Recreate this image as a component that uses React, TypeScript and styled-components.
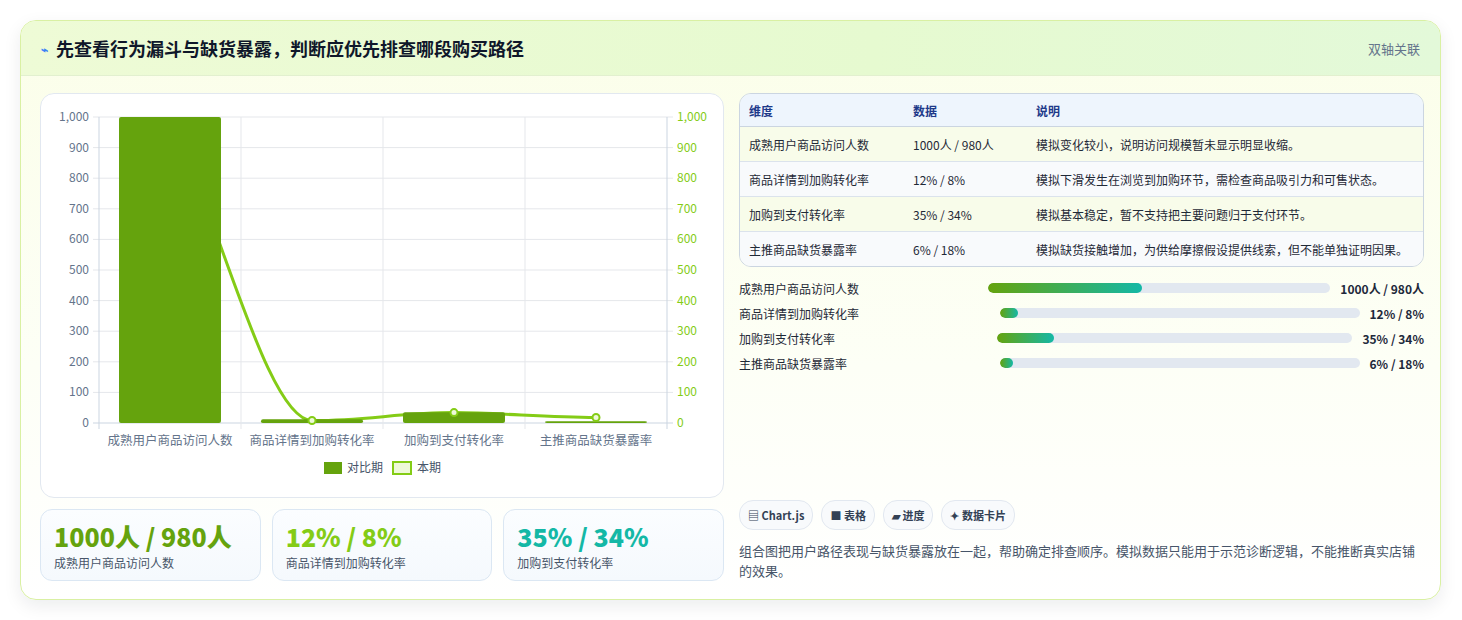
import styled, { createGlobalStyle } from 'styled-components';

const Global = createGlobalStyle`
  body {
    margin: 0;
    background: #ffffff;
    font-family: "Noto Sans CJK SC", "Noto Sans", sans-serif;
    color: #334155;
  }
`;

const Page = styled.div`
  padding: 20px 21px 20px 20px;
`;

const Card = styled.section`
  border: 1px solid #d9f0a3;
  border-radius: 16px;
  background: linear-gradient(180deg, #fbfee9 0%, #fdfff6 60%, #ffffff 100%);
  box-shadow: 0 6px 18px rgba(15, 23, 42, 0.08);
  overflow: hidden;
`;

const Header = styled.header`
  height: 54px;
  display: flex;
  align-items: center;
  justify-content: space-between;
  padding: 0 20px;
  background: linear-gradient(90deg, #eefbd6 0%, #e6fad0 60%, #e3f9d9 100%);
  border-bottom: 1px solid #e2f0cf;
`;

const Title = styled.h2`
  margin: 0;
  font-size: 18px;
  font-weight: 700;
  color: #0f172a;
  display: flex;
  align-items: center;
  gap: 8px;
`;

const Tag = styled.span`
  font-size: 13px;
  color: #64748b;
`;

const Body = styled.div`
  display: grid;
  grid-template-columns: 684px 685px;
  gap: 15px;
  padding: 17px 18px 18px 19px;
`;

const Column = styled.div`
  display: flex;
  flex-direction: column;
`;

const ChartBox = styled.div`
  height: 403px;
  border: 1px solid #e2e8f0;
  border-radius: 14px;
  background: #ffffff;
`;

const Stats = styled.div`
  margin-top: 11px;
  display: grid;
  grid-template-columns: repeat(3, 1fr);
  gap: 11px;
`;

const Stat = styled.div`
  height: 72px;
  box-sizing: border-box;
  border: 1px solid #dbe7f3;
  border-radius: 12px;
  background: linear-gradient(180deg, #fbfdff, #f5f9fd);
  padding: 10px 13px;
`;

const StatValue = styled.div<{ $color: string }>`
  font-size: 25px;
  font-weight: 800;
  line-height: 32px;
  color: ${(p) => p.$color};
`;

const StatLabel = styled.div`
  font-size: 12px;
  color: #475569;
  margin-top: 2px;
`;

const Table = styled.table`
  width: 100%;
  border-collapse: separate;
  border-spacing: 0;
  border: 1px solid #cbd5e1;
  border-radius: 12px;
  overflow: hidden;
  font-size: 12px;
`;

const Th = styled.th`
  text-align: left;
  font-weight: 600;
  color: #1e3a8a;
  background: #eef5fd;
  height: 32px;
  padding: 0 9px;
  border-bottom: 1px solid #cbd5e1;
`;

const Tr = styled.tr<{ $alt: boolean }>`
  background: ${(p) => (p.$alt ? '#f8fafc' : '#f8fcea')};
`;

const Td = styled.td<{ $last: boolean }>`
  height: 34px;
  padding: 0 9px;
  color: #1f2937;
  border-bottom: ${(p) => (p.$last ? 'none' : '1px solid #dbe3ec')};
`;

const Bars = styled.div`
  margin-top: 12px;
  display: flex;
  flex-direction: column;
  gap: 7px;
`;

const BarRow = styled.div`
  display: grid;
  grid-template-columns: 0.7fr 1fr auto;
  gap: 10px;
  align-items: center;
  height: 18px;
  font-size: 12px;
  color: #1f2937;
`;

const Track = styled.div`
  height: 10px;
  border-radius: 5px;
  background: #e2e8f0;
  overflow: hidden;
`;

const Fill = styled.div`
  height: 100%;
  border-radius: 5px;
  background: linear-gradient(90deg, #65a30d, #14b8a6);
`;

const BarValue = styled.span`
  font-weight: 700;
  color: #1e293b;
`;

const Chips = styled.div`
  margin-top: auto;
  display: flex;
  gap: 8px;
`;

const Chip = styled.span`
  height: 28px;
  display: inline-flex;
  align-items: center;
  padding: 0 8px;
  border: 1px solid #e2e8f0;
  border-radius: 14px;
  background: #f8fafc;
  font-size: 11px;
  font-weight: 700;
  color: #334155;
`;

const Note = styled.p`
  margin: 11px 0 0;
  font-size: 13px;
  line-height: 20px;
  color: #475569;
`;

const labels = ['成熟用户商品访问人数', '商品详情到加购转化率', '加购到支付转化率', '主推商品缺货暴露率'];
const prev = [1000, 12, 35, 6];
const cur = [980, 8, 34, 18];
const y = (v: number) => 329 - v * 0.306;
const cx = (i: number) => 129 + i * 142;

function Chart() {
  const ticks = [0, 100, 200, 300, 400, 500, 600, 700, 800, 900, 1000];
  const pts = cur.map((v, i) => [cx(i), y(v)]);
  return (
    <svg width="684" height="403" viewBox="0 0 684 403" fontFamily="Noto Sans CJK SC, sans-serif">
      {ticks.map((t) => (
        <g key={t}>
          <line x1={52} x2={632} y1={y(t)} y2={y(t)} stroke={t === 0 ? '#cbd5e1' : '#e5e7eb'} />
          <text x={48} y={y(t) + 4} fontSize="12" fill="#64748b" textAnchor="end">{t.toLocaleString('en-US')}</text>
          <text x={636} y={y(t) + 4} fontSize="12" fill="#84cc16">{t.toLocaleString('en-US')}</text>
        </g>
      ))}
      {[58, 200, 342, 484, 626].map((x) => (
        <line key={x} x1={x} x2={x} y1={23} y2={335} stroke={x === 58 || x === 626 ? '#cbd5e1' : '#e5e7eb'} />
      ))}
      <path
        d={`M${pts[0][0]},${pts[0][1]} C175,110 225,${pts[1][1]} ${pts[1][0]},${pts[1][1]} C320,327 362,${pts[2][1]} ${pts[2][0]},${pts[2][1]} C462,319 505,${pts[3][1]} ${pts[3][0]},${pts[3][1]}`}
        fill="none"
        stroke="#84cc16"
        strokeWidth="3"
      />
      {prev.map((v, i) => (
        <rect key={i} x={cx(i) - 51} y={y(v)} width={102} height={329 - y(v)} rx={2} fill="#65a30d" />
      ))}
      {pts.slice(1).map(([px, py], i) => (
        <circle key={i} cx={px} cy={py} r={3.5} fill="#eef9d9" stroke="#84cc16" strokeWidth="2" />
      ))}
      {labels.map((l, i) => (
        <text key={l} x={cx(i)} y={351} fontSize="12.5" fill="#64748b" textAnchor="middle">{l}</text>
      ))}
      <rect x={283} y={368} width={18} height={12} fill="#65a30d" />
      <text x={306} y={378} fontSize="12" fill="#475569">对比期</text>
      <rect x={352} y={368} width={18} height={12} fill="#eef9d9" stroke="#84cc16" strokeWidth="2" />
      <text x={376} y={378} fontSize="12" fill="#475569">本期</text>
    </svg>
  );
}

const rows = [
  ['成熟用户商品访问人数', '1000人 / 980人', '模拟变化较小，说明访问规模暂未显示明显收缩。'],
  ['商品详情到加购转化率', '12% / 8%', '模拟下滑发生在浏览到加购环节，需检查商品吸引力和可售状态。'],
  ['加购到支付转化率', '35% / 34%', '模拟基本稳定，暂不支持把主要问题归于支付环节。'],
  ['主推商品缺货暴露率', '6% / 18%', '模拟缺货接触增加，为供给摩擦假设提供线索，但不能单独证明因果。'],
];
const fills = [45, 5, 16, 3.5];

export default function App() {
  return (
    <Page>
      <Global />
      <Card>
        <Header>
          <Title>
            <span style={{ color: '#3b82f6', fontSize: 12 }}>⌁</span>
            先查看行为漏斗与缺货暴露，判断应优先排查哪段购买路径
          </Title>
          <Tag>双轴关联</Tag>
        </Header>
        <Body>
          <Column>
            <ChartBox>
              <Chart />
            </ChartBox>
            <Stats>
              <Stat>
                <StatValue $color="#65a30d">1000人 / 980人</StatValue>
                <StatLabel>成熟用户商品访问人数</StatLabel>
              </Stat>
              <Stat>
                <StatValue $color="#84cc16">12% / 8%</StatValue>
                <StatLabel>商品详情到加购转化率</StatLabel>
              </Stat>
              <Stat>
                <StatValue $color="#14b8a6">35% / 34%</StatValue>
                <StatLabel>加购到支付转化率</StatLabel>
              </Stat>
            </Stats>
          </Column>
          <Column>
            <Table>
              <thead>
                <tr>
                  <Th style={{ width: 146 }}>维度</Th>
                  <Th style={{ width: 105 }}>数据</Th>
                  <Th>说明</Th>
                </tr>
              </thead>
              <tbody>
                {rows.map((r, i) => (
                  <Tr key={r[0]} $alt={i % 2 === 1}>
                    {r.map((c) => (
                      <Td key={c} $last={i === rows.length - 1}>{c}</Td>
                    ))}
                  </Tr>
                ))}
              </tbody>
            </Table>
            <Bars>
              {rows.map((r, i) => (
                <BarRow key={r[0]}>
                  <span>{r[0]}</span>
                  <Track>
                    <Fill style={{ width: `${fills[i]}%` }} />
                  </Track>
                  <BarValue>{r[1]}</BarValue>
                </BarRow>
              ))}
            </Bars>
            <Chips>
              <Chip>▤ Chart.js</Chip>
              <Chip>■ 表格</Chip>
              <Chip>▰ 进度</Chip>
              <Chip>✦ 数据卡片</Chip>
            </Chips>
            <Note>组合图把用户路径表现与缺货暴露放在一起，帮助确定排查顺序。模拟数据只能用于示范诊断逻辑，不能推断真实店铺的效果。</Note>
          </Column>
        </Body>
      </Card>
    </Page>
  );
}
